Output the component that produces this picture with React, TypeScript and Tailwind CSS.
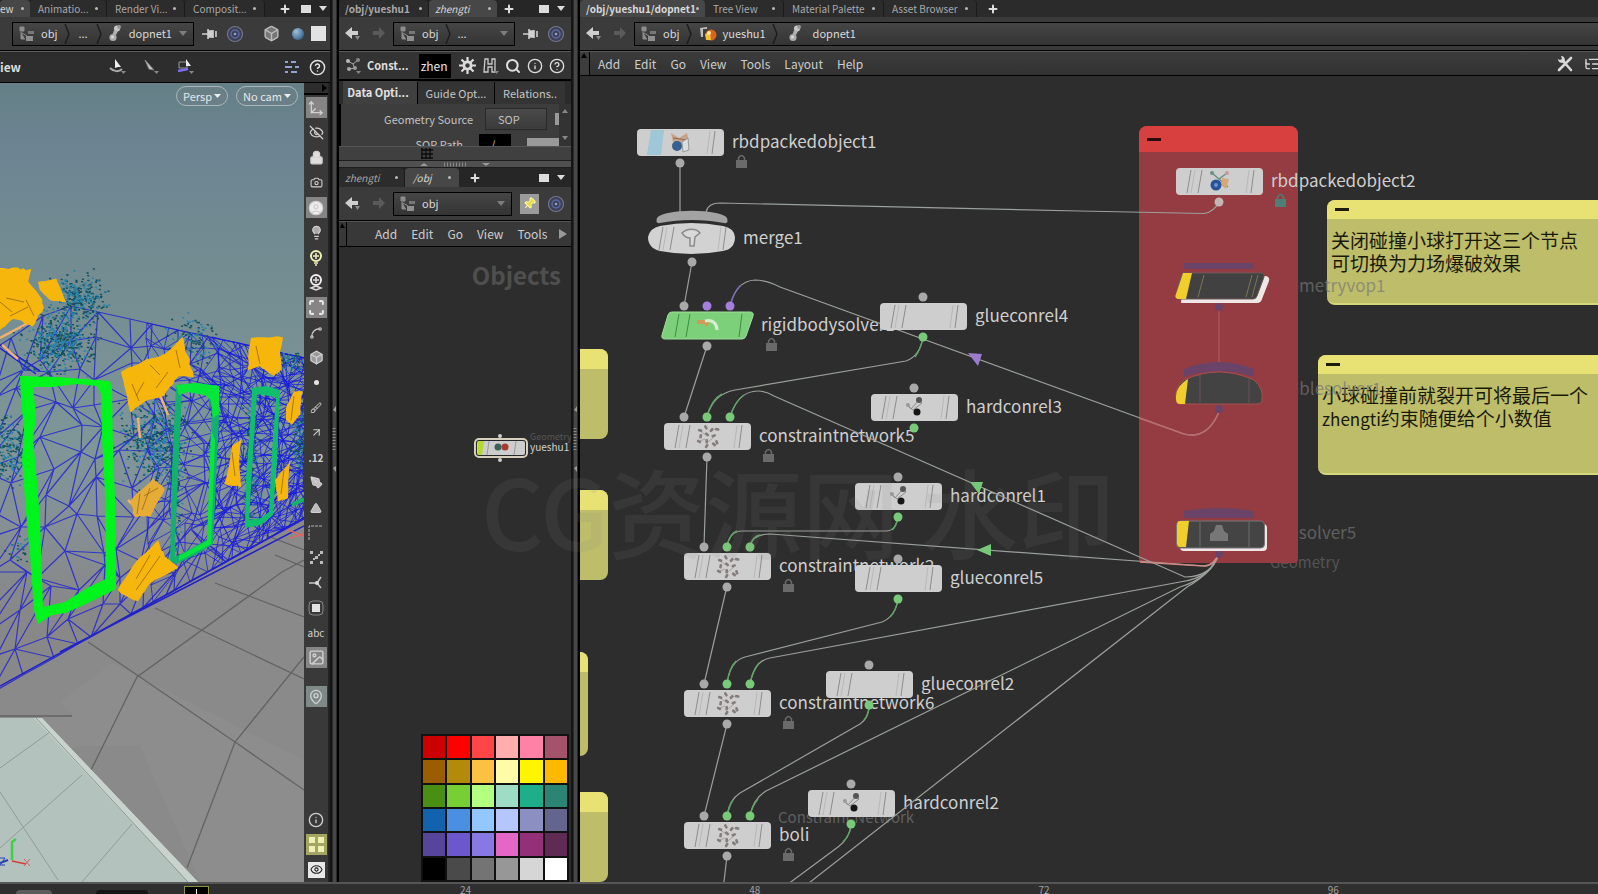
import React from "react";
import {
  ArrowUpRight, Box, Camera, CircleHelp, CircleUser, Eye, Info, Lightbulb, Lock,
  MapPin, Move3d, Pin, Plus, Search, Image as ImageIcon,
  EyeOff, Spline, Scan, PenTool, Triangle, ListTree, Brush,
} from "lucide-react";

const FONT = "font-['Noto_Sans_CJK_SC','Open_Sans',sans-serif]";

/* ---------- shared chrome ---------- */

function Tab({ label, active, bold, italic, className = "px-2" }: { label: string; active?: boolean; bold?: boolean; italic?: boolean; className?: string }) {
  return (
    <button
      type="button"
      className={`flex h-full shrink-0 items-center justify-between rounded-t-sm text-[10px] leading-4 whitespace-nowrap ${
        active ? "bg-[#474747] text-[#d8d8d8]" : "border-r border-[#1b1b1b] bg-[#2c2c2c] text-[#a8a8a8]"
      } ${bold ? "font-bold" : ""} ${italic ? "italic" : ""} ${className}`}
    >
      <span>{label}</span>
      <span className="size-[3px] shrink-0 rounded-full bg-[#b9b9b9]" />
    </button>
  );
}

function PlusTab({ className = "" }: { className?: string }) {
  return (
    <button type="button" aria-label="New tab" className={`flex w-8 shrink-0 items-center justify-center text-[#dedede] ${className}`}>
      <Plus size={12} strokeWidth={4} />
    </button>
  );
}

function PaneButtons() {
  return (
    <div className="ml-auto flex items-center gap-2 pr-1.5">
      <button type="button" aria-label="Maximize pane" className="h-2 w-2.5 bg-[#dcdcdc]" />
      <button type="button" aria-label="Pane menu" className="text-[#dcdcdc]">
        <svg width="8" height="6"><path d="M0 0h8L4 5z" fill="currentColor" /></svg>
      </button>
    </div>
  );
}

function NavArrows() {
  return (
    <div className="flex shrink-0 items-center gap-2.5">
      <button type="button" aria-label="Back">
        <svg width="16" height="16" viewBox="0 0 16 16">
          <path d="M0 7l7-6v4h6v4H7v4z" fill="#cfcfcf" /><path d="M10 10h5l-2.500 4z" fill="#8a8a8a" />
        </svg>
      </button>
      <button type="button" aria-label="Forward">
        <svg width="14" height="16" viewBox="0 0 14 16"><path d="M14 7L8 1v4H2v4h6v4z" fill="#5a5a5a" /></svg>
      </button>
    </div>
  );
}

function ObjIcon() {
  return (
    <svg width="16" height="16" viewBox="0 0 16 16" className="shrink-0">
      <path d="M1 1h4v4H1zM2 6v7h4M3 7l5 3" fill="#8d8d8d" stroke="#8d8d8d" /><rect x="9" y="5" width="6" height="3" fill="#777" />
      <rect x="7" y="10" width="7" height="5" fill="#8f8f8f" />
    </svg>
  );
}

function DopIcon() {
  return (
    <svg width="14" height="17" viewBox="0 0 14 17" className="shrink-0">
      <circle cx="8" cy="3.500" r="3" fill="#c9c9c9" /><circle cx="10" cy="2" r="2" fill="#9b9b9b" />
      <path d="M5 5l4 1-2 4-4 1z" fill="#b0b0b0" /><circle cx="4" cy="12.500" r="3.600" fill="#a9a9a9" /><circle cx="3.500" cy="12" r="1.500" fill="#dadada" />
    </svg>
  );
}

function GeoIcon() {
  return (
    <svg width="18" height="16" viewBox="0 0 18 16" className="shrink-0">
      <path d="M1 2l7-1v2H4v8H2z" fill="#bdbdbd" /><circle cx="12" cy="9" r="5.500" fill="#d9641c" />
      <path d="M7 14l-1-6 5-2 1 8z" fill="#f3c044" /><circle cx="10" cy="7" r="2" fill="#fbe9a0" />
    </svg>
  );
}

const Sep = () => (
  <svg width="7" height="20" viewBox="0 0 7 20" className="shrink-0"><path d="M1 0l4 10-4 10" fill="none" stroke="#1d1d1d" strokeWidth="1.500" /></svg>
);

function PathBox({ children, drop, className = "" }: { children: React.ReactNode; drop?: boolean; className?: string }) {
  return (
    <div className={`flex h-6 min-w-0 items-center border border-black bg-linear-to-b from-[#464646] to-[#343434] px-1.5 text-[11px] text-[#dadada] ${className}`}>
      {children}
      {drop && (
        <button type="button" aria-label="Path history" className="ml-auto text-[#7d7d7d]">
          <svg width="8" height="6"><path d="M0 0h8L4 5z" fill="currentColor" /></svg>
        </button>
      )}
    </div>
  );
}

function RingIcon() {
  return (
    <svg width="18" height="18" viewBox="0 0 18 18" className="shrink-0">
      <circle cx="9" cy="9" r="7.500" fill="#3e4154" stroke="#72758f" strokeWidth="1.200" />
      <circle cx="9" cy="9" r="4" fill="none" stroke="#5a68a8" strokeWidth="1.500" /><circle cx="9" cy="9" r="1.300" fill="#8fa0d8" />
    </svg>
  );
}

function PinIcon() {
  return (
    <svg width="16" height="12" viewBox="0 0 16 12" className="shrink-0">
      <path d="M0 6h6M6 1v10M6 3h5v6H6zM11 2v8M14 3v6" stroke="#d0d0d0" strokeWidth="1.600" fill="#d0d0d0" />
    </svg>
  );
}

function GearIcon() {
  return (
    <svg width="17" height="17" viewBox="0 0 17 17">
      <path d="M8.500 0v17M0 8.500h17M2.500 2.500l12 12M14.500 2.500l-12 12" stroke="#dcdcdc" strokeWidth="2.200" />
      <circle cx="8.500" cy="8.500" r="5" fill="#dcdcdc" /><circle cx="8.500" cy="8.500" r="2.200" fill="#3a3a3a" />
    </svg>
  );
}

function MenuItems({ items }: { items: string[] }) {
  return (
    <div className="flex items-center gap-3.5">
      {items.map((m) => (
        <button key={m} type="button" className="shrink-0 text-[12px] leading-5 text-[#cdcdcd]">{m}</button>
      ))}
    </div>
  );
}

function Handle() {
  return (
    <div className="relative flex h-full w-[9px] shrink-0 border-r-2 border-l-2 border-[#141414] border-r-black bg-[#2a2a2a]">
      <div className="ml-px w-[3px] bg-[#474747]" />
      <svg width="5" height="70" className="absolute top-[404px] left-0"><path d="M1 6l3-4v6zM1 64l3 4v-6z" fill="#999" /><path d="M2 24v22" stroke="#888" strokeWidth="3" strokeDasharray="1 2" /></svg>
    </div>
  );
}

/* ---------- viewport ---------- */

function rng(seed: number) {
  let s = seed;
  return () => {
    s = (s * 1664525 + 1013904223) % 4294967296;
    return s / 4294967296;
  };
}

function buildMesh(cols: number, rows: number, seed: number, x0: number, x1: number) {
  const r = rng(seed);
  const top = (x: number) => (x < 60 ? 345 - x * 0.68 : 304 + (x - 60) * 0.22);
  const bottom = (x: number) => 688 - x * 0.56;
  const pts: [number, number][][] = [];
  for (let i = 0; i <= cols; i++) {
    const t = i / cols;
    const col: [number, number][] = [];
    for (let j = 0; j <= rows; j++) {
      const edge = j === 0 || j === rows;
      const x = x0 + (x1 - x0) * (1 - Math.pow(1 - t, 1.35)) + (r() - 0.5) * ((x1 - x0) / cols) * 0.9;
      const y = top(x) + ((bottom(x) - top(x)) * (j + (edge ? 0 : (r() - 0.5) * 0.9))) / rows;
      col.push([Math.round(x), Math.round(y)]);
    }
    pts.push(col);
  }
  let d = "";
  const seg = (a: [number, number], b: [number, number]) => { d += `M${a[0]} ${a[1]}L${b[0]} ${b[1]}`; };
  for (let i = 0; i <= cols; i++)
    for (let j = 0; j <= rows; j++) {
      if (i < cols) seg(pts[i][j], pts[i + 1][j]);
      if (j < rows) seg(pts[i][j], pts[i][j + 1]);
      if (i < cols && j < rows) {
        if (r() > 0.5) seg(pts[i][j], pts[i + 1][j + 1]);
        else seg(pts[i + 1][j], pts[i][j + 1]);
      }
    }
  return d;
}

function speckle(cx: number, cy: number, rx: number, ry: number, n: number, seed: number) {
  const r = rng(seed * 7919);
  r(); r();
  let d = "";
  for (let i = 0; i < n; i++) {
    const dx = r() + r() + r() - 1.5, dy = r() + r() + r() - 1.5;
    d += `M${(cx + dx * rx).toFixed(1)} ${(cy + dy * ry).toFixed(1)}h1.500v1`;
  }
  return d;
}

function burst(points: [number, number][], seed: number) {
  const r = rng(seed);
  const cx = points.reduce((a, p) => a + p[0], 0) / points.length;
  const cy = points.reduce((a, p) => a + p[1], 0) / points.length;
  let d = "";
  points.forEach((p, i) => {
    const q = points[(i + 1) % points.length];
    for (let k = 0; k < 5; k++) {
      const t = k / 5, s = 0.98 + r() * 0.09;
      const x = p[0] + (q[0] - p[0]) * t, y = p[1] + (q[1] - p[1]) * t;
      d += `${d ? "L" : "M"}${(cx + (x - cx) * s).toFixed(1)} ${(cy + (y - cy) * s).toFixed(1)}`;
    }
  });
  return d + "Z";
}

const MESH = [buildMesh(15, 11, 7, -10, 310), buildMesh(11, 14, 21, 150, 310), buildMesh(7, 18, 5, 215, 310)];
const SPECKS: [number, number, number, number, number][] = [
  [58, 343, 32, 28, 560], [78, 300, 24, 22, 320], [8, 448, 20, 32, 230], [155, 440, 30, 38, 520],
  [190, 340, 24, 20, 120], [300, 440, 10, 30, 150], [18, 550, 14, 12, 30], [290, 362, 12, 9, 60], [175, 480, 6, 60, 100], [250, 460, 8, 60, 120],
];
const BLOBS: [number, number][][] = [
  [[-6, 268], [18, 269], [31, 270], [28, 282], [40, 296], [44, 308], [32, 325], [14, 318], [0, 330]],
  [[38, 282], [56, 279], [66, 302], [50, 300], [40, 290]],
  [[121, 372], [142, 362], [166, 354], [182, 338], [187, 356], [194, 377], [178, 376], [164, 395], [146, 400], [130, 412]],
  [[251, 338], [283, 337], [280, 352], [282, 368], [274, 376], [260, 366], [248, 370]],
  [[232, 446], [241, 440], [239, 460], [241, 487], [225, 483], [229, 468]],
  [[131, 500], [153, 479], [165, 489], [150, 516], [134, 516]],
  [[118, 590], [136, 562], [158, 541], [164, 556], [178, 568], [150, 583], [138, 601]],
  [[286, 408], [294, 391], [302, 392], [300, 414], [292, 424], [286, 420]],
  [[275, 480], [290, 462], [288, 482], [288, 498], [278, 501]],
];

function Viewport() {
  return (
    <svg width="100%" height="100%" viewBox="0 83 304 799" preserveAspectRatio="xMinYMin slice" className="block" aria-label="Scene view">
      <defs>
        <linearGradient id="sky" x1="0" y1="0" x2="0" y2="1">
          <stop offset="0" stopColor="#648086" /><stop offset="0.08" stopColor="#6d8492" /><stop offset="0.18" stopColor="#718a92" /><stop offset="0.25" stopColor="#748d91" />
          <stop offset="0.45" stopColor="#7f9698" /><stop offset="0.56" stopColor="#868f94" /><stop offset="0.66" stopColor="#878787" /><stop offset="1" stopColor="#8d8d8d" />
        </linearGradient>
      </defs>
      <rect y="83" width="304" height="799" fill="url(#sky)" />
      <path d="M304 519L0 686V882H304z" fill="#8a8a8a" />
      <path d="M112 663L60 702l14 14H0v30l140 0 60 136H304V760z" fill="#909090" opacity=".6" />
      <g stroke="#5d5d5d" strokeWidth="1.300" fill="none" opacity=".85">
        <path d="M88 642L140 677 235 742 304 790M155 608L304 679M215 583L304 617M275 555L304 567" />
        <path d="M91 770L137 677 282 572 304 560M187 868L235 742 304 657M265 535L304 550M0 716h72" />
      </g>
      <path d="M0 718H42L198 882H0z" fill="#b3c2bc" />
      <path d="M42 718L198 882h-10L34 718z" fill="#c9d3ce" /><path d="M36 718L188 882" stroke="#8c9894" fill="none" />
      <path d="M0 768L50 732M0 848L82 775M82 882L132 824M0 792L58 880" stroke="#8f9d98" fill="none" />
      <g fill="none">
        <path d={MESH[0]} stroke="#2226d0" strokeWidth="1.200" opacity=".85" />
        <path d={MESH[1]} stroke="#1a1fd6" strokeWidth="1" opacity=".75" />
        <path d={MESH[2]} stroke="#1414e4" strokeWidth="1" opacity=".75" />
        <path d="M0 345l40 26M0 348l36 26M0 686L304 519M304 526L60 652" stroke="#2222c8" strokeWidth="1.500" />
      </g>
      <g fill="none" strokeWidth="1.300">
        {SPECKS.map((s, i) => (
          <React.Fragment key={i}>
            <path d={speckle(s[0], s[1], s[2], s[3], s[4] * 0.6, i + 3)} stroke="#15505e" />
            <path d={speckle(s[0], s[1], s[2], s[3], s[4] * 0.4, i + 33)} stroke="#2684ad" />
          </React.Fragment>
        ))}
      </g>
      <path fillRule="evenodd" fill="#00f51c" d="M20 376l38 1 52 4 2 8 1 60 2 50 1 90-28 14-22 10-14 2-14 9-4-14-4-55-5-55-3-40 2-30-3-30zM33 387l3 28-3 25 3 30 4 50 3 87 22-5 22-14 19-9-1-85-3-55-1-45-4-8-20-2-24 3z" />
      <path fillRule="evenodd" fill="#12b26e" d="M176 385l20-2 22 3 1 30-6 128-14 9-22 11-7-3 2-90zM182 393l-3 60-4 92v12l15-8 18-10 1-40 3-92-6-14-14-4z" />
      <path fill="#05e83a" d="M176 385l20-2 23 3v28l-6 4-2-18-6-5-18-3-8 3zM211 430l4 10-4 104-32 17v-5l28-15z" />
      <path fillRule="evenodd" fill="#0fbf6b" d="M252 388l14-2 14 4-3 70-4 55-12 10-16 3 1-50 4-50zM257 394l-4 60-4 66 12-2 8-6 3-60 4-55z" />
      <path d="M292 505l12-6" stroke="#12b26e" strokeWidth="4" />
      <path d="M0 338l30-16M2 345l16 14M160 395l8 20M138 418l2 20M128 500l14 14" stroke="#f0b070" strokeWidth="2.500" />
      {BLOBS.map((b, i) => <path key={i} d={burst(b, i + 11)} fill={i === 5 ? "#e6ac35" : "#f6b60c"} />)}
      <path
        d="M0 302l12 10M6 298l18 4M10 316l18-9M26 300l8 16M132 384l7 17M136 396l8-14M150 365l10 10M176 350l4 18M168 372l-12 16M256 346l4 18M232 452l3 24M150 488l-8 22M140 494l-3 20M158 488l-14 8M150 555l-14 24M160 556l-24 34M294 396l-3 24M284 470l-3 24"
        stroke="#94681a" strokeWidth=".8" fill="none"
      />
      <path d="M288 530l16 6M290 538l14-4" stroke="#d66" strokeWidth="1.500" />
      <path d="M12 860V842l4-3" stroke="#3fd04a" strokeWidth="2.500" fill="none" /><path d="M12 861l14 3" stroke="#d83b3b" strokeWidth="1.500" />
      <path d="M0 863l8-3" stroke="#2c3fb0" strokeWidth="2" /><path d="M24 859l6 7M30 859l-6 7" stroke="#d06060" /><path d="M0 858h5l-5 7h5" stroke="#2940c0" fill="none" />
    </svg>
  );
}

const STRIP: { icon: React.ReactNode; name: string; on?: boolean }[] = [
  { icon: <Move3d size={16} />, name: "Construction plane", on: true },
  { icon: <EyeOff size={15} />, name: "Ghost objects" },
  { icon: <Lock size={15} fill="#ddd" />, name: "Lock camera" },
  { icon: <Camera size={13} />, name: "Camera" },
  { icon: <CircleUser size={16} fill="#eee" />, name: "Shading", on: true },
  { icon: <Lightbulb size={15} fill="#aaa" />, name: "Lighting" },
  { icon: <svg width="16" height="18" viewBox="0 0 16 18"><circle cx="8" cy="7" r="5" stroke="#f0efb8" fill="none" strokeWidth="2" /><path d="M8 4v6M5 7h6M6 14h4M7 16h2" stroke="#f0efb8" strokeWidth="1.500" /></svg>, name: "Headlight" },
  { icon: <svg width="16" height="18" viewBox="0 0 16 18"><circle cx="8" cy="6" r="5" stroke="#eee" fill="none" strokeWidth="2" /><path d="M8 3v6M5 6h6M3 14l5-2 5 2-5 2z" stroke="#ddd" strokeWidth="1.500" fill="none" /></svg>, name: "High quality light" },
  { icon: <Scan size={17} strokeWidth={3} color="#e8e8e8" fill="#333" />, name: "Backface", on: true },
  { icon: <Spline size={14} />, name: "Hulls" },
  { icon: <Box size={15} fill="#999" />, name: "Primitive hulls" },
  { icon: <span className="size-[5px] rounded-full bg-[#e4e4e4]" />, name: "Points" },
  { icon: <Brush size={12} />, name: "Point normals" },
  { icon: <ArrowUpRight size={13} />, name: "Point trails" },
  { icon: <span className="text-[10px] font-bold">.12</span>, name: "Point numbers" },
  { icon: <PenTool size={13} fill="#bbb" />, name: "Primitive normals" },
  { icon: <Triangle size={12} fill="#bbb" />, name: "Primitive numbers" },
  { icon: <svg width="16" height="16"><path d="M1 15V1h14" stroke="#b5b5b5" fill="none" strokeDasharray="3 1" /></svg>, name: "Profile curves" },
  { icon: <svg width="15" height="15" viewBox="0 0 15 15"><path d="M1 1h3v3H1zM11 1h3v3h-3zM1 11h3v3H1zM11 11h3v3h-3zM6 6h3v3H6zM4 8h2v2H4zM9 4h2v2H9z" fill="#bbb" /></svg>, name: "Vertices" },
  { icon: <svg width="16" height="16" viewBox="0 0 16 16"><path d="M9 8l4-6M9 8H1M9 8l4 5" stroke="#c8c8c8" strokeWidth="1.500" /><circle cx="9" cy="8" r="2" fill="#ddd" /></svg>, name: "Axis" },
  { icon: <svg width="16" height="16" viewBox="0 0 16 16"><rect x="1" y="1" width="14" height="14" rx="4" fill="none" stroke="#888" /><rect x="4" y="4" width="8" height="8" fill="#e2e2e2" /></svg>, name: "Texture" },
  { icon: <span className="text-[10px]">abc</span>, name: "Labels" },
  { icon: <ImageIcon size={17} />, name: "Background image", on: true },
];

function StripButton({ icon, name, on, tone = "bg-[#858585]" }: { icon: React.ReactNode; name: string; on?: boolean; tone?: string }) {
  return (
    <button type="button" aria-label={name} className="flex h-[25px] w-full shrink-0 items-center justify-center text-[#d0d0d0]">
      <span className={`flex size-[21px] items-center justify-center ${on ? tone : ""}`}>{icon}</span>
    </button>
  );
}

function CameraPill({ children }: { children: React.ReactNode }) {
  return (
    <button type="button" className="flex h-5 items-center gap-0.5 rounded-full border border-[#a9b8bd] bg-[#6d7f86]/60 px-1.5">
      {children}
      <svg width="7" height="5"><path d="M0 0h7L3.500 4z" fill="#eee" /></svg>
    </button>
  );
}

function ScenePane() {
  return (
    <section className="flex w-[330px] shrink-0 flex-col bg-[#3a3a3a]">
      <div className="flex h-[17px] bg-[#262626]">
        <Tab label="ew" active className="w-[30px] pr-1.5" />
        <Tab label="Animatio..." className="w-[77px] px-2" />
        <Tab label="Render Vi..." className="w-[78px] px-2" />
        <Tab label="Composit..." className="w-[80px] px-2" />
        <PlusTab className="ml-1" />
        <PaneButtons />
      </div>
      <div className="flex h-[34px] items-center gap-2 border-b border-black bg-[#3b3b3b] pr-1 pl-3">
        <PathBox drop className="w-[182px] gap-1.5">
          <ObjIcon /><span>obj</span><Sep /><span className="px-0.5">...</span><Sep /><DopIcon /><span>dopnet1</span>
        </PathBox>
        <div className="flex flex-1 items-center justify-between">
          <PinIcon /><RingIcon />
          <Box size={17} color="#bbb" className="ml-3" fill="#777" />
          <span className="ml-1 size-3 rounded-full bg-radial-[at_35%_30%] from-[#9cc0d8] to-[#1e4a78]" />
          <span className="size-[15px] bg-[#e2e2e2]" />
        </div>
      </div>
      <div className="flex h-8 items-center border-t border-b border-t-[#5a5a5a] border-b-black bg-[#2d2d2d] pr-1 text-[12px] font-bold text-[#dcdcdc]">
        <span className="w-[109px]">iew</span>
        <div className="flex flex-1 items-center gap-4 text-[#c8c8c8]">
          <svg width="18" height="18" viewBox="0 0 18 18"><path d="M6 1l6 8H9l-3 1z" fill="#eee" /><path d="M1 10c4 4 9 4 12 1" stroke="#aaa" strokeWidth="2" fill="none" /><path d="M12 13h5l-2.500 3z" fill="#888" /></svg>
          <svg width="18" height="18" viewBox="0 0 18 18"><path d="M2 2l9 10-5-1z" fill="#ccc" stroke="#888" /><path d="M11 13h5l-2.500 3z" fill="#888" /></svg>
          <svg width="18" height="18" viewBox="0 0 18 18"><path d="M2 4h8v6H2z" fill="none" stroke="#999" /><path d="M9 1l5 7H9z" fill="#eee" /><path d="M1 13l10-2" stroke="#7d6cf0" strokeWidth="2.500" /><path d="M12 13h5l-2.500 3z" fill="#888" /></svg>
        </div>
        <div className="flex items-center gap-2">
          <svg width="17" height="16"><path d="M1 3h3M7 3h5M1 8h7M11 8h4M1 13h3M7 13h6" stroke="#8ea6cf" strokeWidth="2" /></svg>
          <CircleHelp size={17} color="#e6e6e6" />
        </div>
      </div>
      <div className="flex min-h-0 flex-1">
        <div className="relative min-w-0 flex-1">
          <Viewport />
          <div className="absolute top-[3px] right-1.5 flex gap-2 text-[11px] leading-4 whitespace-nowrap text-[#e8e8e8]">
            <CameraPill>Persp</CameraPill>
            <CameraPill>No cam</CameraPill>
          </div>
        </div>
        <div className="flex w-[26px] flex-col border-r-2 border-r-[#222] bg-[#393939]">
          <div className="flex h-3 shrink-0 items-center justify-end border-b-2 border-black bg-[#2d2d2d]">
            <svg width="6" height="8"><path d="M0 0l5 4-5 4z" fill="#000" /></svg>
          </div>
          {STRIP.map((s) => <StripButton key={s.name} {...s} />)}
          <div className="mt-3.5"><StripButton icon={<MapPin size={16} />} name="Display points" on tone="bg-[#7f8a88]" /></div>
          <div className="mt-auto">
            <StripButton icon={<Info size={16} />} name="Information" />
            <StripButton icon={<svg width="15" height="15" viewBox="0 0 15 15"><path d="M0 0h6v6H0zM9 0h6v6H9zM0 9h6v6H0zM9 9h6v6H9z" fill="#eef0b4" /></svg>} name="Layout" on tone="bg-[#a3a560]" />
            <StripButton icon={<span className="flex h-4 w-[17px] items-center justify-center bg-[#e8e8e8]"><Eye size={13} color="#222" /></span>} name="Display options" />
          </div>
        </div>
      </div>
    </section>
  );
}

/* ---------- middle column ---------- */

const SWATCHES = [
  ["bg-[#cc0000]", "bg-[#ff0000]", "bg-[#ff4545]", "bg-[#ffadad]", "bg-[#ff82a6]", "bg-[#a3546a]"],
  ["bg-[#9a5d00]", "bg-[#b38a0a]", "bg-[#fac142]", "bg-[#fffba6]", "bg-[#fff500]", "bg-[#ffb800]"],
  ["bg-[#4a8f14]", "bg-[#76cf33]", "bg-[#b5ff80]", "bg-[#9fdcc6]", "bg-[#1fae8a]", "bg-[#2c8474]"],
  ["bg-[#1262ae]", "bg-[#4a90e2]", "bg-[#92c8ff]", "bg-[#b5c6ff]", "bg-[#8b8fc2]", "bg-[#64648e]"],
  ["bg-[#56459a]", "bg-[#6c58cc]", "bg-[#8878e4]", "bg-[#e466c6]", "bg-[#943078]", "bg-[#5f2b52]"],
  ["bg-[#000000]", "bg-[#4a4a4a]", "bg-[#747474]", "bg-[#979797]", "bg-[#d6d6d6]", "bg-[#ffffff]"],
];

function MiddlePane() {
  return (
    <div className="flex w-[232px] shrink-0 flex-col bg-[#2d2d2d]">
      <section className="flex h-[160px] shrink-0 flex-col">
        <div className="flex h-[17px] bg-[#262626]">
          <Tab label="/obj/yueshu1" bold className="w-[90px] px-1.5" />
          <Tab label="zhengti" active italic className="w-[68px] px-1.5" />
          <PlusTab className="-ml-1" />
          <PaneButtons />
        </div>
        <div className="flex h-[34px] items-center justify-between gap-2 border-b border-black bg-[#3b3b3b] px-1.5">
          <NavArrows />
          <PathBox drop className="w-[126px] gap-1.5"><ObjIcon /><span>obj</span><Sep /><span>...</span></PathBox>
          <PinIcon /><RingIcon />
        </div>
        <div className="flex h-7 items-center gap-1 border-t border-t-[#585858] bg-[#333] px-1.5 text-[12px] text-[#dedede]">
          <svg width="18" height="18" viewBox="0 0 18 18" className="shrink-0"><path d="M3 4l5 3 5-4M4 12l6-1M8 7l2 5" stroke="#aaa" fill="none" /><circle cx="3" cy="4" r="2" fill="#bbb" /><circle cx="13" cy="3" r="2" fill="#888" /><circle cx="4" cy="12" r="2" fill="#aaa" /><circle cx="10" cy="11" r="2" fill="#999" /><path d="M11 14h5l-2.500 3z" fill="#888" /></svg>
          <span className="shrink-0 text-[11px] font-bold">Const...</span>
          <input aria-label="Node name" defaultValue="zhen" className="ml-1.5 h-6 w-8 shrink-0 bg-black px-0.5 text-[12px] text-[#e6e6e6]" />
          <div className="ml-1 flex flex-1 items-center justify-between">
            <button type="button" aria-label="Settings"><GearIcon /></button>
            <button type="button" aria-label="Houdini">
              <svg width="17" height="18" viewBox="0 0 17 18"><path d="M3 2h3v5h4V2h3v13h-3v-5H6v5H2z" fill="none" stroke="#ccc" strokeWidth="1.300" /><path d="M12 14h5l-2.500 3z" fill="#888" /></svg>
            </button>
            <button type="button" aria-label="Search"><Search size={16} strokeWidth={3} /></button>
            <button type="button" aria-label="Info"><Info size={16} /></button>
            <button type="button" aria-label="Help"><CircleHelp size={16} /></button>
          </div>
        </div>
        <div className="flex h-[25px] shrink-0 items-end border-t-2 border-black bg-[#2b2b2b] pl-1 text-[11px] text-[#c6c6c6]">
          <button type="button" className="h-[23px] w-[74px] shrink-0 bg-[#404040] pr-1 font-bold text-[#e2e2e2]">Data Opti...</button>
          <button type="button" className="h-[22px] w-[78px] shrink-0 border-x border-black bg-[#343434]">Guide Opt...</button>
          <button type="button" className="h-[22px] w-[70px] shrink-0 bg-[#343434]">Relations..</button>
        </div>
        <div className="flex min-h-0 flex-1 overflow-hidden border-l-2 border-black bg-[#3d3d3d] text-[11px] text-[#c2c2c2]">
          <div className="min-w-0 flex-1">
            <div className="flex h-[30px] items-center justify-end gap-3">
              <label htmlFor="geo">Geometry Source</label>
              <select id="geo" className="h-[22px] w-[62px] appearance-none border border-[#2a2a2a] bg-linear-to-b from-[#4a4a4a] to-[#3b3b3b] px-3"><option>SOP</option></select>
              <span className="-ml-1 h-3 w-1 bg-[#999]" />
            </div>
            <div className="flex h-5 justify-end gap-4">
              <label htmlFor="sop" className="leading-5">SOP Path</label>
              <input id="sop" defaultValue="/" className="h-5 w-[32px] bg-black px-3" />
              <span className="mt-1 h-2 w-8 bg-[#999]" />
            </div>
          </div>
          <div className="w-3 bg-[#333]">
            <svg width="12" height="40"><path d="M3 9h6L6 5zM3 32h6l-3 4z" fill="#888" /></svg>
          </div>
        </div>
        <div className="flex h-3.5 shrink-0 items-center justify-center border-t border-[#555] bg-[#404040]">
          <svg width="12" height="11" className="-ml-14"><path d="M1 0v11M5 0v11M9 0v11M0 2h12M0 6h12M0 10h12" stroke="#0c0c0c" strokeWidth="1.300" /></svg>
        </div>
      </section>
      <div className="flex h-2 shrink-0 items-center justify-center border-y border-[#1c1c1c] bg-[#505050]">
        <svg width="70" height="5"><path d="M0 4l4-3 4 3zM62 1l4 3 4-3z" fill="#999" /><path d="M24 2.500h22" stroke="#8a8a8a" strokeWidth="4" strokeDasharray="1 2" /></svg>
      </div>
      <section className="flex min-h-0 flex-1 flex-col">
        <div className="flex h-[19px] shrink-0 bg-[#262626]">
          <Tab label="zhengti" italic className="w-[66px] px-1.5" />
          <Tab label="/obj" active italic className="w-[54px] px-2" />
          <PlusTab />
          <PaneButtons />
        </div>
        <div className="flex h-[34px] shrink-0 items-center justify-between gap-2 border-b border-black bg-[#3b3b3b] px-1.5">
          <NavArrows />
          <PathBox drop className="w-[126px] gap-1.5"><ObjIcon /><span>obj</span></PathBox>
          <button type="button" aria-label="Pin" className="flex size-5 items-center justify-center bg-[#9b9b9b]"><Pin size={13} fill="#e6dc3c" color="#fff8a0" className="rotate-45" /></button>
          <RingIcon />
        </div>
        <div className="flex h-[26px] shrink-0 items-center border-t border-b border-t-[#555] border-b-black bg-[#383838] pr-1">
          <span className="mr-7 h-full w-2 border-r border-black"><svg width="7" height="8"><path d="M1 6l2-5 3 5z" fill="#000" /></svg></span>
          <MenuItems items={["Add", "Edit", "Go", "View", "Tools"]} />
          <svg width="8" height="10" className="ml-auto shrink-0"><path d="M0 0l8 5-8 5z" fill="#999" /></svg>
        </div>
        <div className="relative flex min-h-0 flex-1 flex-col items-end justify-between pr-0.5">
          <h2 className="mt-2.5 pr-2 text-[24px] leading-9 font-bold text-[#4f4f4f]">Objects</h2>
          <button type="button" className="absolute top-[185px] left-[135px] flex items-center gap-0.5">
            <svg width="54" height="30" viewBox="0 0 54 30">
              <circle cx="26" cy="3" r="2" fill="#ccc" /><circle cx="26" cy="27" r="2" fill="#ccc" />
              <rect x="1" y="6" width="52" height="18" rx="4" fill="#282828" stroke="#d6cfc0" strokeWidth="2" />
              <rect x="3" y="8" width="48" height="14" rx="2" fill="#cdcdcd" /><path d="M4 8h6l-2 14H4z" fill="#b5d832" />
              <path d="M15 8l-2 14M42 8l-2 14" stroke="#999" /><circle cx="24" cy="14" r="3.500" fill="#3a6058" /><circle cx="31" cy="14" r="3.500" fill="#a83a32" />
            </svg>
            <span className="flex flex-col pb-3 text-left text-[10px] leading-[10px] text-[#d2d2d2]">
              <span className="text-[9px] text-[#555]">Geometry</span>yueshu1
            </span>
          </button>
          <div className="grid size-[148px] grid-cols-6 grid-rows-6 gap-0.5 border-2 border-[#111] bg-[#111]">
            {SWATCHES.flat().map((c) => <button key={c} type="button" aria-label="Colour swatch" className={c} />)}
          </div>
        </div>
      </section>
    </div>
  );
}

/* ---------- network editor ---------- */

const OX = 580;
const OY = 76;

type Kind = "net" | "glue" | "hard" | "rbd1" | "rbd2" | "solver" | "merge";
interface GNode { id: string; x: number; y: number; kind: Kind; lock?: boolean; ins: [number, string][]; out: string }
const G = "#a9a9a9", N = "#79c97a", P = "#a57fdc";

const NODES: GNode[] = [
  { id: "rbdpackedobject1", x: 637, y: 129, kind: "rbd1", lock: true, ins: [], out: G },
  { id: "merge1", x: 648, y: 225, kind: "merge", ins: [], out: G },
  { id: "rigidbodysolver1", x: 664, y: 312, kind: "solver", lock: true, ins: [[20, G], [43, P], [66, P]], out: G },
  { id: "constraintnetwork5", x: 664, y: 423, kind: "net", lock: true, ins: [[20, G], [43, N], [66, N]], out: G },
  { id: "constraintnetwork2", x: 684, y: 553, kind: "net", lock: true, ins: [[20, G], [43, N], [66, N]], out: G },
  { id: "constraintnetwork6", x: 684, y: 690, kind: "net", lock: true, ins: [[20, G], [43, N], [66, N]], out: G },
  { id: "boli", x: 684, y: 822, kind: "net", lock: true, ins: [[20, G], [43, N], [66, N]], out: G },
  { id: "glueconrel4", x: 880, y: 303, kind: "glue", ins: [[43, G]], out: N },
  { id: "hardconrel3", x: 871, y: 394, kind: "hard", ins: [[43, G]], out: N },
  { id: "hardconrel1", x: 855, y: 483, kind: "hard", ins: [[43, G]], out: N },
  { id: "glueconrel5", x: 855, y: 565, kind: "glue", ins: [[43, G]], out: N },
  { id: "glueconrel2", x: 826, y: 671, kind: "glue", ins: [[43, G]], out: N },
  { id: "hardconrel2", x: 808, y: 790, kind: "hard", ins: [[43, G]], out: N },
  { id: "rbdpackedobject2", x: 1176, y: 168, kind: "rbd2", lock: true, ins: [], out: "#c4b4b4" },
];

const BYPASSED = [
  { label: "geometryvop1", x: 1270, y: 285 },
  { label: "enablesolver1", x: 1270, y: 388 },
  { label: "sopsolver5", x: 1270, y: 532 },
];

const CHIPS: [number, number, number][] = [
  [36, 7, 20], [42, 4, 60], [48, 7, 130], [53, 6, 10], [37, 13, 100], [43, 11, 40], [50, 13, 160], [35, 18, 30], [43, 18, 90], [53, 19, 70], [43, 23, 120], [50, 21, 45],
];

function NodeIcon({ kind }: { kind: Kind }) {
  switch (kind) {
    case "net":
      return (
        <g>
          <path d="M36 8l6 4M46 8l5-2M44 19l6-5M36 18l5-2" stroke="#aaa0a0" fill="none" />
          {CHIPS.map(([x, y, a]) => <rect key={`${x}-${y}`} x={x - 2} y={y - 1} width="4.500" height="2.600" rx="1" fill="#857c7c" transform={`rotate(${a} ${x} ${y})`} />)}
        </g>
      );
    case "hard":
      return (
        <g>
          <path d="M35 10l5 5 8-9 3 3-9 7z" fill="none" stroke="#8a8a8a" /><circle cx="48" cy="6" r="3" fill="#555" /><circle cx="37" cy="11" r="2" fill="#999" />
          <circle cx="46" cy="18" r="3.500" fill="#161616" />
        </g>
      );
    case "rbd1":
      return (
        <g>
          <path d="M14 1l-4 25h14l3-25z" fill="#9fc7d6" /><path d="M34 4l8 5 8-5 2 9-8 4-8-4z" fill="#c9a184" /><path d="M36 9l14 2" stroke="#8c6a55" />
          <circle cx="40" cy="17" r="5" fill="#33608f" /><path d="M45 13l6-4 1 12-6 2z" fill="#ddd" stroke="#999" />
        </g>
      );
    case "rbd2":
      return (
        <g>
          <path d="M36 5l7 6 8-6M43 11l9 8" stroke="#6f8f85" strokeWidth="1.500" fill="none" /><path d="M46 10l7 1-3 10-5-4z" fill="#d6a878" />
          <circle cx="40" cy="17" r="5.500" fill="#2a519b" /><circle cx="40" cy="17" r="2" fill="#6a94c8" />
          <circle cx="36" cy="5" r="2" fill="#6b9080" /><circle cx="51" cy="5" r="2" fill="#c99" />
        </g>
      );
    case "solver":
      return (
        <g>
          <path d="M33 10h8l3 3" stroke="#d09a58" strokeWidth="4" fill="none" /><path d="M41 9c8-2 12 3 12 9" stroke="#d6efd0" strokeWidth="3" fill="none" />
        </g>
      );
    case "merge":
      return <path d="M34 8c5-5 14-5 18 0l-5 4-1 9h-4v-8c-3 0-6-2-8-5z" fill="#d9d9d9" stroke="#8a8a8a" strokeWidth="1.500" />;
    default:
      return null;
  }
}

function NodeShape({ n }: { n: GNode }) {
  const merge = n.kind === "merge";
  return (
    <g transform={`translate(${n.x} ${n.y})`}>
      {n.ins.map(([x, c]) => <circle key={x} cx={x} cy="-6" r="4.500" fill={c} />)}
      <circle cx={merge ? 44 : 43} cy={merge ? 37 : 34} r="4.500" fill={n.out} />
      {merge ? (
        <>
          <path d="M9-7Q11-10 20-12C35-15 53-15 68-12Q77-10 79-7q2 6-3 5C55-6 33-6 12-2q-5 1-3-5z" fill="#a3a3a3" />
          <path d="M0 12Q2 3 12 1 43-5 75 1 86 3 87 12 87 24 75 26 43 32 12 26 0 23 0 12z" fill="#d2d2d2" />
        </>
      ) : n.kind === "solver" ? (
        <path d="M8 0H86q4 0 3 4L82 24q-1 3-4 3H1q-4 0-3-4L4 3q1-3 4-3z" fill="#7dd07a" stroke="#9de09a" />
      ) : (
        <rect width="87" height="27" rx="4" fill="#cecece" />
      )}
      <path d="M15 2l-4 23M26 2l-4 23M78 2l-3 23" stroke={n.kind === "solver" ? "#3d8a44" : "#8c8c8c"} fill="none" />
      {n.kind !== "solver" && <path d="M19 2l-4 23M73 2l-3 23" stroke="#b8b8b8" fill="none" />}
      <NodeIcon kind={n.kind} />
    </g>
  );
}

const WIRES = [
  "M680 162V214",
  "M706 212Q708 203 720 203L1080 211 1204 213.500Q1214 212 1219 202",
  "M692 262L684 306",
  "M730 306Q736 281 755 280 766 280 780 287L1184 434Q1207 440 1219 412",
  "M707 346L684 417",
  "M923 337Q920 356 906 361L735 390Q713 394 707 417",
  "M730 417Q738 391 758 391 766 391 774 396L1185 577Q1212 577 1219 553",
  "M707 457L704 546",
  "M898 517Q896 531 886 531H742Q730 531 727 546",
  "M750 546Q753 534 770 534L1204 566Q1214 566 1219 553",
  "M727 586L704 684",
  "M898 599Q896 616 882 622L745 657Q730 661 727 684",
  "M750 684Q754 661 770 658L1180 582Q1212 578 1219 553",
  "M727 724L704 816",
  "M869 705Q869 718 860 724L740 793Q729 800 727 816",
  "M750 816Q753 799 766 791L1180 587Q1212 577 1219 553",
  "M727 856L723 890",
  "M851 825Q850 838 838 847L780 890",
  "M800 890L1187 587Q1212 573 1219 553",
];

function RightNote({ className, children }: { className: string; children: React.ReactNode }) {
  return (
    <article className={`absolute right-0 overflow-hidden rounded-l-lg border-b-2 border-[#d6d67c] bg-[#bdbd6a] ${className}`}>
      <header className="flex h-[19px] items-center bg-[#e8e274] pl-2"><span className="h-[3px] w-3.5 bg-[#1c1c08]" /></header>
      <p className="px-1 pt-[9px] text-[19px] leading-[23px] whitespace-nowrap text-[#1a1a0a]">{children}</p>
    </article>
  );
}

function LeftNote({ className }: { className: string }) {
  return (
    <div className={`absolute left-0 overflow-hidden rounded-r-lg bg-[#bdbd6a] ${className}`}>
      <div className="h-5 bg-[#e8e274]" />
    </div>
  );
}

function Label({ x, y, className = "text-[17px] text-[#cfcfcf]", children }: { x: number; y: number; className?: string; children: React.ReactNode }) {
  return (
    <span style={{ left: x - OX, top: y - OY }} className={`absolute -translate-y-1/2 leading-6 whitespace-nowrap ${className}`}>
      {children}
    </span>
  );
}

function NetworkCanvas() {
  return (
    <div className="relative min-h-0 flex-1 overflow-hidden bg-[#2d2d2d]">
      <LeftNote className="top-[273px] h-[90px] w-7" />
      <LeftNote className="top-[414px] h-[90px] w-7" />
      <LeftNote className="top-[576px] h-[104px] w-2" />
      <LeftNote className="top-[716px] h-[90px] w-7" />
      <RightNote className="top-[124px] left-[747px] h-[105px]">关闭碰撞小球打开这三个节点<br />可切换为力场爆破效果</RightNote>
      <RightNote className="top-[279px] left-[738px] h-[120px]">小球碰撞前就裂开可将最后一个<br /><span className="text-[17px]">zhengti</span>约束随便给个小数值</RightNote>
      {BYPASSED.map((b) => <Label key={b.label} x={b.x} y={b.y} className="text-[17px] text-[#777]/70">{b.label}</Label>)}
      <Label x={1270} y={562} className="text-[15px] text-[#666]/70">Geometry</Label>
      <div className="absolute top-[50px] left-[559px] h-[437px] w-[159px] overflow-hidden rounded-t-lg rounded-b bg-[#953c42]">
        <div className="flex h-[26px] items-center bg-[#d8403f] pl-2"><span className="h-[3px] w-3.5 bg-[#2a0c0c]" /></div>
      </div>
      {NODES.map((n) => <Label key={n.id} x={n.x + (n.kind === "solver" ? 97 : 95)} y={n.y + 12}>{n.id}</Label>)}
      <Label x={778} y={817} className="text-[15px] text-[#777]/70">Constraint Network</Label>
      <svg width="100%" height="100%" className="absolute inset-0">
        <g transform={`translate(${-OX} ${-OY})`}>
          <path d="M1219 303V372" stroke="#b85a62" />
          {WIRES.map((d) => <path key={d} d={d} fill="none" stroke="#9aa09a" strokeWidth="1.200" />)}
          <g fill="none" strokeWidth="1.500">
            <path d="M730 306q4-15 11-21" stroke="#7d68b8" />
            <path d="M707 417q4-17 15-23M730 417q5-16 14-22M727 546q3-13 10-15M750 546q3-10 10-11M898 517q-2 10-6 13M923 337q-2 12-8 20M727 684q2-16 9-23M750 684q3-14 9-21M898 599q-2 12-8 18M727 816q2-10 6-16M750 816q2-10 8-17M869 705q0 10-5 15M851 825q-1 10-8 17" stroke="#5ea463" />
            <path d="M1140 562l64 4q10 0 15-13" stroke="#cf8a84" />
            <path d="M1139 418l45 16q23 6 35-22" stroke="#b86a6e" />
          </g>
          <path d="M968 353l14 1-4 12z" fill="#9b7bd0" /><path d="M970 482l13 0-4 12z" fill="#77c97a" /><path d="M977 550l14-6v12z" fill="#77c97a" />

          {NODES.map((n) => <NodeShape key={n.id} n={n} />)}
          {NODES.filter((n) => n.lock).map((n) => (
            <g key={n.id} transform={`translate(${n.x + (n.kind === "solver" ? 101 : 98)} ${n.y + 25})`}>
              <path d="M1 6h11v8H1z" fill={n.kind === "rbd2" ? "#4f7d78" : "#6a6a6a"} /><path d="M3.500 6V4q3-5 6 0v2" stroke={n.kind === "rbd2" ? "#4f7d78" : "#6a6a6a"} fill="none" strokeWidth="1.500" />
            </g>
          ))}

          <g fill="#6a4468">
            <path d="M1184 263h70v6h-70zM1184 369q35-14 70 0v8q-35-12-70 0zM1184 511q35-6 70 0v7h-70z" />
            <circle cx="1219" cy="307" r="4" /><circle cx="1219" cy="409" r="4" /><circle cx="1219" cy="554" r="4" />
          </g>
          <path d="M1183 276h83q4 1 3 5l-7 18q-1 4-5 4h-76z" fill="#efe6e6" />
          <path d="M1183 273h78q4 0 3 4l-7 19q-1 3-4 3h-74q-5 0-3-5l5-18q1-3 2-3z" fill="#414141" stroke="#6a5a5a" />
          <path d="M1183 273h9l-6 26h-8q-4-1-2-5z" fill="#f0cf2c" />
          <path d="M1204 275l-6 22M1252 275l-6 22M1258 275l-6 22" stroke="#80745a" />
          <path d="M1176 400q-2-12 8-20 35-16 70 0 10 8 8 20 0 4-5 4h-77q-4 0-4-4z" fill="#434343" stroke="#a5504e" />
          <path d="M1188 379l-3 25h-5q-4 0-4-5-1-12 12-20z" fill="#f0cf2c" /><path d="M1200 375v28M1249 378v25" stroke="#6a5555" />
          <rect x="1180" y="524" width="87" height="27" rx="4" fill="#efe6e6" />
          <rect x="1176.500" y="521" width="88" height="27" rx="4" fill="#444" stroke="#777" />
          <path d="M1180 521h9l-3 26h-6q-3 0-3-4v-18q0-4 3-4z" fill="#f0cf2c" /><path d="M1200 522v25M1249 522v25" stroke="#6c6c6c" />
          <path d="M1216 525h6l2 6 4 3v7h-18v-7l4-3z" fill="#777" />
        </g>
      </svg>
    </div>
  );
}

function NetworkPane() {
  return (
    <section className="flex min-w-0 flex-1 flex-col bg-[#2d2d2d]">
      <div className="flex h-[17px] shrink-0 bg-[#2b2b2b]">
        <Tab label="/obj/yueshu1/dopnet1" active bold className="w-[125px] px-1.5" />
        <Tab label="Tree View" className="w-[79px] px-2" />
        <Tab label="Material Palette" className="w-[100px] px-2" />
        <Tab label="Asset Browser" className="w-[93px] px-2" />
        <PlusTab />
      </div>
      <div className="flex h-[34px] shrink-0 items-center gap-2 border-b border-black bg-[#3b3b3b] pl-1.5">
        <NavArrows />
        <PathBox className="flex-1 gap-1.5 border-r-0">
          <ObjIcon /><span>obj</span><Sep /><GeoIcon /><span>yueshu1</span><Sep /><span className="ml-1"><DopIcon /></span><span className="ml-1">dopnet1</span>
        </PathBox>
      </div>
      <div className="flex h-[25px] shrink-0 items-center border-t border-b border-t-[#555] border-b-black bg-linear-to-b from-[#3c3c3c] to-[#323232]">
        <span className="mr-2 h-full w-2.5 border-r border-black bg-[#3d3d3d]"><svg width="8" height="8"><path d="M1 6l3-5 3 5z" fill="#000" /></svg></span>
        <MenuItems items={["Add", "Edit", "Go", "View", "Tools", "Layout", "Help"]} />
        <div className="ml-auto flex items-center gap-2.5 text-[#d8d8d8]">
          <button type="button" aria-label="Tools">
            <svg width="17" height="17" viewBox="0 0 17 17"><path d="M2 15L14 3M6 6l8 9" stroke="#d8d8d8" strokeWidth="2.600" strokeLinecap="round" /><path d="M1 4q0 4 5 4l2-2q0-5-4-5l1 3-2 1z" fill="#d8d8d8" /></svg>
          </button>
          <button type="button" aria-label="Tree" className="w-3.5 overflow-hidden"><ListTree size={16} /></button>
        </div>
      </div>
      <NetworkCanvas />
    </section>
  );
}

/* ---------- page ---------- */

export default function App() {
  return (
    <main className={`relative flex h-screen flex-col overflow-hidden bg-[#2d2d2d] ${FONT}`}>
      <div className="flex min-h-0 flex-1">
        <ScenePane />
        <Handle />
        <MiddlePane />
        <Handle />
        <NetworkPane />
      </div>
      <div aria-hidden="true" className="pointer-events-none absolute top-[434px] left-[481px] text-[97px] leading-[150px] font-medium whitespace-nowrap text-[#808080]/12">CG资源网 水印</div>
      <footer className="flex h-3 shrink-0 overflow-hidden border-t-2 border-[#555] bg-[#2f2f2f] text-[10px] leading-3 text-[#a0a0a0]">
        <div className="flex w-[321px] shrink-0 pt-0.5">
          <span className="mt-1 ml-4 h-2 w-9 rounded-t bg-[#5c5c5c]" /><span className="mt-1 ml-11 h-2 w-[52px] rounded-t bg-[#161616]" />
          <span className="ml-[36px] flex h-3 w-[25px] justify-center border border-[#8f9440] bg-black pt-0.5"><span className="w-px bg-white" /></span>
        </div>
        {["24", "48", "72", "96"].map((t) => <span key={t} className="w-[18.1%] shrink-0 text-center">{t}</span>)}
      </footer>
    </main>
  );
}
